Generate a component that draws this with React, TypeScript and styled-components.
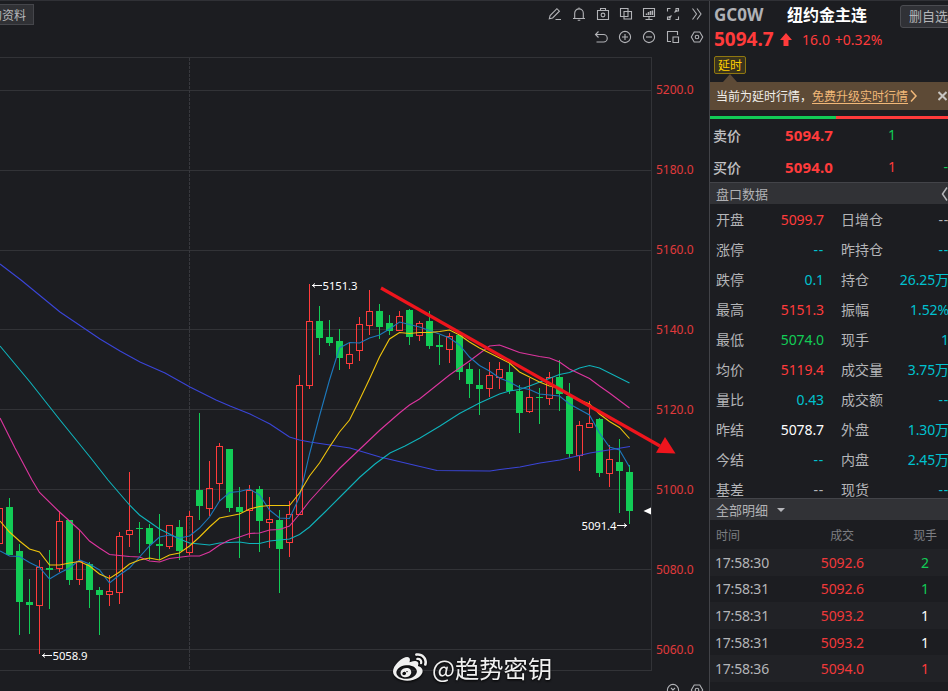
import React from "react";
import styled, { createGlobalStyle } from "styled-components";
import { FaWeibo } from "react-icons/fa";

const RED = "#ff3b3b";
const GREEN = "#12cc56";
const CYAN = "#00c1cf";
const GREY = "#b4b5b8";
const WHITE = "#ffffff";

const GlobalStyle = createGlobalStyle`
  * { box-sizing: border-box; }
  body {
    margin: 0;
    background: #1c1d21;
    color: ${GREY};
    font-family: "Noto Sans", "Noto Sans CJK SC", sans-serif;
    font-size: 14px;
  }
`;

const Screen = styled.div`
  display: flex;
  width: 948px;
  height: 691px;
  overflow: hidden;
  border-top: 1px solid #303136;
`;

/* ---------- chart side ---------- */

const ChartPane = styled.main`
  position: relative;
  display: flex;
  flex-direction: column;
  width: 709px;
  height: 690px;
  overflow: hidden;
`;

const TopBar = styled.header`
  display: flex;
  justify-content: space-between;
  height: 56px;
  flex: none;
`;

const InfoButton = styled.button`
  display: flex;
  align-items: center;
  justify-content: flex-end;
  width: 34px;
  height: 21px;
  margin: 3px 0 0;
  padding: 0 7px 0 0;
  overflow: hidden;
  border: 1px solid #45464b;
  border-left: 0;
  background: #303135;
  color: #b8b9bc;
  font: 12px "Noto Sans CJK SC", sans-serif;
  white-space: nowrap;
`;

const Tools = styled.div`
  display: grid;
  grid-template-columns: repeat(7, 16px);
  grid-template-rows: 16px 16px;
  column-gap: 8px;
  row-gap: 7px;
  padding: 5px 4px 0 0;
`;

const ToolIcon = styled.svg<{ $col?: number }>`
  width: 16px;
  height: 16px;
  overflow: visible;
  fill: none;
  stroke: #b2b3b7;
  stroke-width: 1.1;
  ${(p) => (p.$col ? `grid-column: ${p.$col};` : "")}
`;

const ChartBody = styled.div`
  display: flex;
  height: 614px;
  flex: none;
`;

const Plot = styled.svg`
  display: block;
  width: 652px;
  height: 614px;
  flex: none;
  overflow: visible;
  position: relative;
`;

const Axis = styled.div`
  display: flex;
  flex-direction: column;
  padding: 23px 0 0 4px;
  color: #e03a3c;
  font-size: 12px;
`;

const Tick = styled.div`
  height: 79.95px;
  flex: none;
  line-height: 20px;
`;

const BottomTools = styled.footer`
  display: flex;
  justify-content: flex-end;
  gap: 8px;
  padding: 11px 4px 0 0;
`;

const Watermark = styled.div`
  position: absolute;
  left: 393px;
  top: 648px;
  display: flex;
  align-items: center;
  gap: 5px;
  height: 38px;
  color: #f0f0f0;
  font: 24.3px "Noto Sans CJK SC", sans-serif;
  white-space: nowrap;
  filter: drop-shadow(0 1px 1px #000);
`;

const WatermarkText = styled.span`
  margin-top: -1px;
`;

type Candle = [number, number, number, number, number];

/* [direction, high, body top, body bottom, low] in plot units, one every 10px */
const candles: Candle[] = [
  [1, 508, 508, 544, 544], [0, 498, 507, 555, 555], [0, 544, 551, 602, 635], [0, 579, 602, 605, 634],
  [1, 560, 567, 606, 654], [0, 550, 568, 570, 609], [1, 511, 521, 569, 572], [0, 520, 520, 580, 585],
  [1, 530, 561, 580, 585], [0, 562, 564, 590, 608], [0, 587, 590, 595, 635], [1, 575, 591, 595, 606],
  [1, 532, 536, 593, 604], [1, 472, 530, 535, 547], [0, 522, 528, 529, 553], [0, 524, 528, 544, 560],
  [0, 514, 544, 546, 560], [1, 525, 525, 547, 549], [0, 520, 527, 551, 560], [1, 511, 516, 553, 555],
  [0, 413, 490, 506, 520], [1, 461, 488, 509, 516], [1, 443, 446, 484, 501], [0, 449, 449, 508, 512],
  [0, 487, 507, 512, 558], [1, 485, 490, 511, 538], [0, 486, 489, 521, 552], [1, 497, 519, 523, 548],
  [0, 510, 520, 549, 593], [1, 501, 514, 543, 557], [1, 375, 385, 515, 515], [1, 284, 321, 386, 389],
  [0, 306, 321, 338, 355], [0, 320, 337, 343, 346], [0, 329, 341, 358, 370], [1, 342, 354, 364, 369],
  [1, 317, 324, 351, 361], [1, 290, 311, 326, 335], [0, 304, 311, 327, 339], [0, 315, 323, 331, 335],
  [1, 311, 316, 331, 331], [0, 309, 310, 337, 345], [1, 321, 323, 336, 341], [0, 311, 321, 346, 349],
  [0, 335, 345, 347, 365], [1, 333, 336, 350, 363], [0, 335, 335, 372, 380], [0, 363, 369, 384, 398],
  [0, 369, 385, 389, 415], [1, 362, 375, 389, 397], [1, 362, 369, 378, 389], [0, 363, 372, 391, 394],
  [0, 385, 391, 413, 433], [1, 378, 397, 412, 413], [0, 388, 397, 398, 424], [1, 372, 377, 399, 405],
  [0, 360, 377, 394, 411], [0, 383, 396, 454, 458], [1, 421, 425, 456, 471], [1, 401, 423, 428, 428],
  [0, 418, 419, 473, 477], [1, 445, 459, 474, 487], [0, 439, 462, 471, 513], [0, 465, 472, 511, 524],
];

const averages = [
  {
    color: "#3a45d8",
    points:
      "0,264 21,280 60,312 100,339 120,351 140,362 165,373 190,387 216,400 230,406 250,414 270,424 289.5,437 299.5,440 310,442 350,448 380,457 420,466.5 437,470.5 490,471 500,469.5 520,467 540,463 560,460 590,453 630,446.5",
  },
  {
    color: "#0fb3bb",
    points:
      "0,346 30,382 60,420 90,457 108,480 129.5,505 139.5,515 149.5,522 159.5,529 169.5,534 179.5,539 189.5,543 209.5,545 219.5,543 239.5,542 249.5,543.5 259.5,543.5 269.5,541 289.5,539 299.5,534.5 309.5,527 325,512 345,492 360,477 375,464 390,453 405,446 420,438 440,426 459.5,413.5 479.5,403 499.5,394 509.5,391 519.5,389.5 529.5,386 559.5,374.5 569.5,372.5 579.5,368 589.5,365.5 599.5,368 629.5,383",
  },
  {
    color: "#dd359f",
    points:
      "0,418 15,448 32,480 39.5,492.5 59.5,512 79.5,530 89.5,541 99.5,548 109.5,554.5 129.5,556.5 139.5,557 149.5,561 159.5,562 169.5,558.5 189.5,556 199.5,556 209.5,552 219.5,545 229.5,540 239.5,537 249.5,533.5 259.5,533 269.5,530 279.5,529.5 289.5,526 299.5,514 309.5,501 325,484 340,468 360,449 380,430 399.5,413 409.5,405 419.5,399 449.5,375 469.5,361 489.5,346 499.5,345 519.5,352.5 539.5,356.5 549.5,358 559.5,362 569.5,369 589.5,378.5 599.5,386 609.5,393 629.5,408",
  },
  {
    color: "#1d79bd",
    points:
      "0,551 9.5,556 19.5,556.5 29.5,562.5 39.5,567.5 49.5,579 59.5,573 69.5,568 79.5,560 89.5,564 99.5,570 109.5,583 119.5,575 129.5,568 139.5,557 149.5,546 159.5,537 169.5,535 179.5,538 189.5,536 199.5,528 209.5,517 219.5,501 229.5,492.5 239.5,491.5 249.5,489 259.5,495 269.5,510 279.5,518 289.5,518.5 299.5,497 309.5,454 319.5,416 329.5,380 339.5,348 349.5,342.5 359.5,343 369.5,338 379.5,335 389.5,329 399.5,322 409.5,324.5 419.5,327 429.5,330.5 439.5,334 449.5,338 459.5,345 469.5,357 479.5,365.5 489.5,371 499.5,378 509.5,382 519.5,387.5 529.5,389.5 539.5,394 549.5,395 559.5,396 569.5,404 579.5,409.5 589.5,415 599.5,433 609.5,447 619.5,450 629.5,467",
  },
  {
    color: "#f0c40c",
    points:
      "0,521 9.5,532 19.5,541 29.5,549 39.5,552 49.5,565 59.5,565 69.5,563 79.5,561.5 89.5,566 99.5,574 109.5,578.5 119.5,572 129.5,564 139.5,560 149.5,558 159.5,560 169.5,555 179.5,553 189.5,546 199.5,537 209.5,527 219.5,518 229.5,516 239.5,514 249.5,509 259.5,506.5 269.5,505.5 289.5,505.5 299.5,493 309.5,476 319.5,463 329.5,447 339.5,432 349.5,420 359.5,400 369.5,379 379.5,357 389.5,339 399.5,332.5 409.5,333.5 419.5,332.5 429.5,332.5 439.5,331.5 449.5,330 459.5,335 469.5,342 479.5,348 499.5,358 509.5,363 519.5,372 529.5,377 539.5,382 549.5,386 559.5,388 569.5,396 589.5,404 599.5,414 609.5,421.5 619.5,427.5 629.5,438.5",
  },
];

const gridRows = [90, 170, 250, 329, 409, 489, 569, 649];

function PriceChart() {
  return (
    <Plot viewBox="0 57 652 614">
      <g stroke="#323337" fill="none">
        {[57, ...gridRows, 670].map((y) => (
          <path key={y} d={`M0 ${y + 0.5}H652`} />
        ))}
        <path d="M651.5 57V671" />
        <path d="M189.5 58V670" stroke="#37383d" strokeDasharray="3 1" />
      </g>
      {candles.map(([up, high, top, bottom, low], i) => {
        const x = i * 10 - 1;
        return up ? (
          <g key={i} stroke={RED} fill="none">
            <path d={`M${x + 0.5} ${high}V${top}M${x + 0.5} ${bottom}V${low}`} />
            <rect x={x - 2.5} y={top + 0.5} width="6" height={bottom - top - 1} />
          </g>
        ) : (
          <g key={i} fill={GREEN}>
            <rect x={x} y={high} width="1" height={low - high} />
            <rect x={x - 3} y={top} width="7" height={bottom - top} />
          </g>
        );
      })}
      {averages.map((a) => (
        <polyline key={a.color} points={a.points} fill="none" stroke={a.color} strokeWidth="1.1" />
      ))}
      <g fill="#fff" fontFamily="Noto Sans, sans-serif" fontSize="11.3">
        <text x="322.5" y="290" textLength="35">5151.3</text>
        <text x="52.5" y="660" textLength="35">5058.9</text>
        <text x="581.5" y="530" textLength="35">5091.4</text>
      </g>
      <g stroke="#fff" fill="none">
        <path d="M312 285.5h10M315 283.5l-2.5 2 2.5 2M42 655.5h10M45 653.5l-2.5 2 2.5 2M617 525.5h10M624 523.5l2.5 2-2.5 2" />
      </g>
      <path d="M643.5 511l7.5-3.5v7z" fill="#fff" />
      <path d="M381 288L660 446" stroke="#ee151d" strokeWidth="3.2" />
      <path d="M665 437l10.5 16.5-19.5-.8z" fill="#ee151d" />
    </Plot>
  );
}

function Hexagon({ col }: { col?: number }) {
  return (
    <ToolIcon $col={col} viewBox="0 0 16 16">
      <path d="M5.2 3h5.6l2.9 5-2.9 5H5.2L2.3 8z" />
      <circle cx="8" cy="8" r="1.8" />
    </ToolIcon>
  );
}

function ChartTools() {
  return (
    <Tools>
      <ToolIcon viewBox="-2 0 16 16"><path d="M2.3 12.8l.8-3.3 6.8-6.8 2.5 2.5-6.8 6.8zM8.5 13.5H14" /></ToolIcon>
      <ToolIcon viewBox="-2 0 16 16"><path d="M2 12.5h12M3.7 12.5V7.2a4.3 4.3 0 018.6 0v5.3M8 1.5v1.4M6.7 14.2h2.6" /></ToolIcon>
      <ToolIcon viewBox="-2 0 16 16"><path d="M2.5 4.5h11v9h-11zM5.5 4.5v-2h5v2" /><circle cx="8" cy="9" r="1.9" /></ToolIcon>
      <ToolIcon viewBox="-1 0 16 16"><path d="M2.5 2.5H10v8H2.5zM6 5.5h7.5V13H6z" /></ToolIcon>
      <ToolIcon viewBox="0 0 16 16"><path d="M2.5 2.5h11v8h-11zM8 10.5V13M4.5 13.5h7" /><path d="M5.5 9V7.5M7.5 9V6M9.5 9V5M11.5 9V4.5" strokeWidth="1.5" /></ToolIcon>
      <ToolIcon viewBox="0 0 16 16"><path d="M5.5 2.5h-3v3M10.5 2.5h3v3M2.5 10.5v3h3M13.5 10.5v3h-3M9.5 6.5L12 4M6.5 9.5L4 12M10 4h2v2M4 10v2h2" /></ToolIcon>
      <ToolIcon viewBox="0 0 16 16"><path d="M3.5 2.5l4 5.5-4 5.5M8 2.5L12 8l-4 5.5" /></ToolIcon>
      <ToolIcon $col={3} viewBox="0 0 16 16"><path d="M5.5 2.5l-3 3 3 3M2.5 5.5h8a3.4 3.4 0 010 7.5h-7" /></ToolIcon>
      <ToolIcon $col={4} viewBox="0 0 16 16"><circle cx="8" cy="8" r="5.6" /><path d="M5 8h6M8 5v6" /></ToolIcon>
      <ToolIcon $col={5} viewBox="0 0 16 16"><circle cx="8" cy="8" r="5.6" /><path d="M5 8h6" /></ToolIcon>
      <ToolIcon $col={6} viewBox="0 0 16 16"><path d="M6 12.5H2.5v-10h10V6M8 8h5.5v5.5H8z" /></ToolIcon>
      <Hexagon col={7} />
    </Tools>
  );
}

/* ---------- quote side ---------- */

const QuotePane = styled.aside`
  width: 239px;
  height: 690px;
  flex: none;
  overflow: hidden;
  border-left: 1px solid #424348;
  white-space: nowrap;
`;

const TitleRow = styled.div`
  display: flex;
  align-items: center;
  height: 26px;
  padding: 1px 0 0 4px;
  font-size: 16px;
  font-weight: 700;
`;

const Code = styled.span`
  width: 73px;
  flex: none;
  color: #b0b1b5;
  font-size: 17px;
  line-height: 22px;
`;

const Name = styled.span`
  width: 113px;
  flex: none;
  color: #fff;
  line-height: 22px;
`;

const RemoveButton = styled.button`
  height: 23px;
  flex: none;
  margin-top: 3px;
  padding: 0 8px;
  border: 1px solid #4b4c51;
  border-radius: 3px 0 0 3px;
  background: #303136;
  color: #b4b5b8;
  font: 13px/20px "Noto Sans CJK SC", sans-serif;
`;

const PriceRow = styled.div`
  display: flex;
  align-items: center;
  height: 24px;
  padding-left: 4px;
  color: ${RED};
`;

const LastPrice = styled.strong`
  width: 66px;
  font-size: 19px;
  line-height: 24px;
`;

const UpArrow = styled.svg`
  width: 12px;
  height: 13px;
  fill: ${RED};
`;

const Change = styled.span`
  margin-left: 10px;
  font-size: 14px;
  letter-spacing: 0.05px;
  word-spacing: 1px;
`;

const DelayTag = styled.div`
  width: 32px;
  height: 18px;
  margin: 5px 0 0 4px;
  border: 1px solid #8f7710;
  border-radius: 2px;
  background: #39331d;
  color: #ffcf00;
  font-size: 12px;
  line-height: 17px;
  text-align: center;
`;

const Pointer = styled.div`
  width: 0;
  height: 8px;
  margin-left: 13px;
  border: 7px solid transparent;
  border-top: 0;
  border-bottom: 8px solid #5d4a36;
`;

const Notice = styled.div`
  display: flex;
  align-items: center;
  height: 28px;
  padding-left: 6px;
  background: #5d4a36;
  color: #f0eeea;
  font-size: 12px;
`;

const Upgrade = styled.a`
  display: flex;
  align-items: center;
  color: #f1b878;
  span { text-decoration: underline; text-underline-offset: 2px; }
`;

const NoticeIcon = styled.svg<{ $gap?: number }>`
  width: 9px;
  height: 14px;
  flex: none;
  margin-left: ${(p) => p.$gap ?? 0}px;
  fill: none;
  stroke: currentColor;
  stroke-width: 1.5;
`;

const RatioBar = styled.div`
  display: flex;
  height: 9px;
  padding-top: 6px;
  &::before { content: ""; width: 126px; height: 3px; background: ${GREEN}; }
  &::after { content: ""; flex: 1; height: 3px; background: ${RED}; }
`;

const Orders = styled.div`
  height: 63px;
`;

const OrderRow = styled.div`
  display: grid;
  grid-template-columns: 40px 80px 63px 60px;
  height: 32px;
  padding: 0 0 1px 3px;
  align-items: center;
  text-align: right;
`;

const OrderLabel = styled.span`
  color: #c0c1c4;
  font-weight: 500;
  text-align: left;
`;

const Num = styled.span<{ $c: string; $bold?: boolean }>`
  color: ${(p) => p.$c};
  font-size: ${(p) => (p.$bold ? 15 : 14)}px;
  font-weight: ${(p) => (p.$bold ? 700 : 400)};
  letter-spacing: ${(p) => (p.$bold ? 0.15 : 0)}px;
`;

const SectionHead = styled.div`
  display: flex;
  align-items: center;
  height: 22px;
  padding-left: 6px;
  border-top: 1px solid #434449;
  background: #313236;
  color: #b0b1b4;
  font-size: 13px;
`;

const SectionTitle = styled.span<{ $w: number }>`
  width: ${(p) => p.$w}px;
`;

const SectionIcon = styled.svg<{ $push?: boolean }>`
  width: 8px;
  height: 14px;
  flex: none;
  margin-left: ${(p) => (p.$push ? 163 : 0)}px;
  fill: none;
  stroke: #b5b6ba;
`;

const Stats = styled.div`
  height: 294px;
  overflow: hidden;
`;

const StatRow = styled.div`
  display: grid;
  grid-template-columns: 40px 68px 59px 50px;
  height: 30px;
  padding-left: 6px;
  align-items: center;
  font-size: 14px;
`;

const StatValue = styled.span<{ $c: string; $last?: boolean }>`
  color: ${(p) => p.$c};
  text-align: right;
  justify-self: end;
  letter-spacing: -0.1px;
  margin-right: ${(p) => (p.$last ? -16 : 0)}px;
`;

const StatLabel = styled.span<{ $second?: boolean }>`
  padding-left: ${(p) => (p.$second ? 17 : 0)}px;
`;

const Dashes = styled.span`
  letter-spacing: 0.7px;
`;

const TradeRow = styled.div<{ $head?: boolean; $alt?: boolean }>`
  display: grid;
  grid-template-columns: 70px 78px 73px;
  align-items: center;
  height: ${(p) => (p.$head ? 29 : 26.6)}px;
  padding-left: 6px;
  background: ${(p) => (p.$alt ? "#212226" : "transparent")};
  color: ${(p) => (p.$head ? "#7d7e82" : GREY)};
  font-size: ${(p) => (p.$head ? 12 : 14)}px;
`;

const TradeTime = styled.span`
  margin-left: -1px;
  letter-spacing: -0.2px;
`;

const TradeCell = styled.span<{ $c?: string; $pad?: number }>`
  color: ${(p) => p.$c ?? "inherit"};
  text-align: right;
  padding-right: ${(p) => p.$pad ?? 0}px;
  letter-spacing: -0.1px;
`;

const stats: [string, string, string, string, string, string][] = [
  ["开盘", "5099.7", RED, "日增仓", "--", GREY],
  ["涨停", "--", CYAN, "昨持仓", "--", CYAN],
  ["跌停", "0.1", CYAN, "持仓", "26.25万", CYAN],
  ["最高", "5151.3", RED, "振幅", "1.52%", CYAN],
  ["最低", "5074.0", GREEN, "现手", "1", CYAN],
  ["均价", "5119.4", RED, "成交量", "3.75万", CYAN],
  ["量比", "0.43", CYAN, "成交额", "--", CYAN],
  ["昨结", "5078.7", WHITE, "外盘", "1.30万", CYAN],
  ["今结", "--", CYAN, "内盘", "2.45万", CYAN],
  ["基差", "--", GREY, "现货", "--", CYAN],
];

const trades: [string, string, string, string][] = [
  ["17:58:30", "5092.6", "2", GREEN],
  ["17:58:31", "5092.6", "1", GREEN],
  ["17:58:31", "5093.2", "1", WHITE],
  ["17:58:31", "5093.2", "1", WHITE],
  ["17:58:36", "5094.0", "1", RED],
];

const showValue = (v: string) => (v === "--" ? <Dashes>{v}</Dashes> : v);

function QuotePanel() {
  return (
    <QuotePane>
      <TitleRow>
        <Code>GC0W</Code>
        <Name>纽约金主连</Name>
        <RemoveButton>删自选</RemoveButton>
      </TitleRow>
      <PriceRow>
        <LastPrice>5094.7</LastPrice>
        <UpArrow viewBox="0 0 12 13"><path d="M6 0l6 7H8.5v6h-5V7H0z" /></UpArrow>
        <Change>16.0 +0.32%</Change>
      </PriceRow>
      <DelayTag>延时</DelayTag>
      <Pointer />
      <Notice>
        当前为延时行情，
        <Upgrade>
          <span>免费升级实时行情</span>
          <NoticeIcon $gap={1} viewBox="0 0 9 14"><path d="M2 1.5L7 7l-5 5.5" /></NoticeIcon>
        </Upgrade>
        <NoticeIcon $gap={20} viewBox="0 0 9 14"><path d="M.5 3l8 8M8.5 3l-8 8" stroke="#c7c4c0" strokeWidth="2" /></NoticeIcon>
      </Notice>
      <RatioBar />
      <Orders>
        <OrderRow>
          <OrderLabel>卖价</OrderLabel>
          <Num $c={RED} $bold>5094.7</Num>
          <Num $c={GREEN}>1</Num>
        </OrderRow>
        <OrderRow>
          <OrderLabel>买价</OrderLabel>
          <Num $c={RED} $bold>5094.0</Num>
          <Num $c={RED}>1</Num>
          <Num $c={GREEN}>-1</Num>
        </OrderRow>
      </Orders>
      <SectionHead>
        <SectionTitle $w={65}>盘口数据</SectionTitle>
        <SectionIcon $push viewBox="0 0 8 14"><path d="M7 .5L2.500 7 7 13.500" strokeWidth="1.5" /></SectionIcon>
      </SectionHead>
      <Stats>
        {stats.map(([a, av, ac, b, bv, bc]) => (
          <StatRow key={a}>
            <StatLabel>{a}</StatLabel>
            <StatValue $c={ac}>{showValue(av)}</StatValue>
            <StatLabel $second>{b}</StatLabel>
            <StatValue $c={bc} $last>{showValue(bv)}</StatValue>
          </StatRow>
        ))}
      </Stats>
      <SectionHead>
        <SectionTitle $w={61}>全部明细</SectionTitle>
        <SectionIcon viewBox="-1 0 8 14"><path d="M-1 5h8L3 9z" fill="#b5b6ba" stroke="none" /></SectionIcon>
      </SectionHead>
      <TradeRow $head>
        <span>时间</span>
        <TradeCell $pad={10}>成交</TradeCell>
        <TradeCell>现手</TradeCell>
      </TradeRow>
      {trades.map(([time, price, lots, color], i) => (
        <TradeRow key={i} $alt={i % 2 === 0}>
          <TradeTime>{time}</TradeTime>
          <TradeCell $c="#f0393a">{price}</TradeCell>
          <TradeCell $c={color} $pad={8}>{lots}</TradeCell>
        </TradeRow>
      ))}
    </QuotePane>
  );
}

export default function App() {
  return (
    <>
      <GlobalStyle />
      <Screen>
        <ChartPane>
          <TopBar>
            <InfoButton>的资料</InfoButton>
            <ChartTools />
          </TopBar>
          <ChartBody>
            <PriceChart />
            <Axis>
              {["5200.0", "5180.0", "5160.0", "5140.0", "5120.0", "5100.0", "5080.0", "5060.0"].map((v) => (
                <Tick key={v}>{v}</Tick>
              ))}
            </Axis>
          </ChartBody>
          <BottomTools>
            <ToolIcon viewBox="0 0 16 16"><circle cx="8" cy="8" r="5.6" /><path d="M6 6l4 4M10 6l-4 4" /></ToolIcon>
            <Hexagon />
          </BottomTools>
          <Watermark>
            <FaWeibo size={34} />
            <WatermarkText>@趋势密钥</WatermarkText>
          </Watermark>
        </ChartPane>
        <QuotePanel />
      </Screen>
    </>
  );
}
